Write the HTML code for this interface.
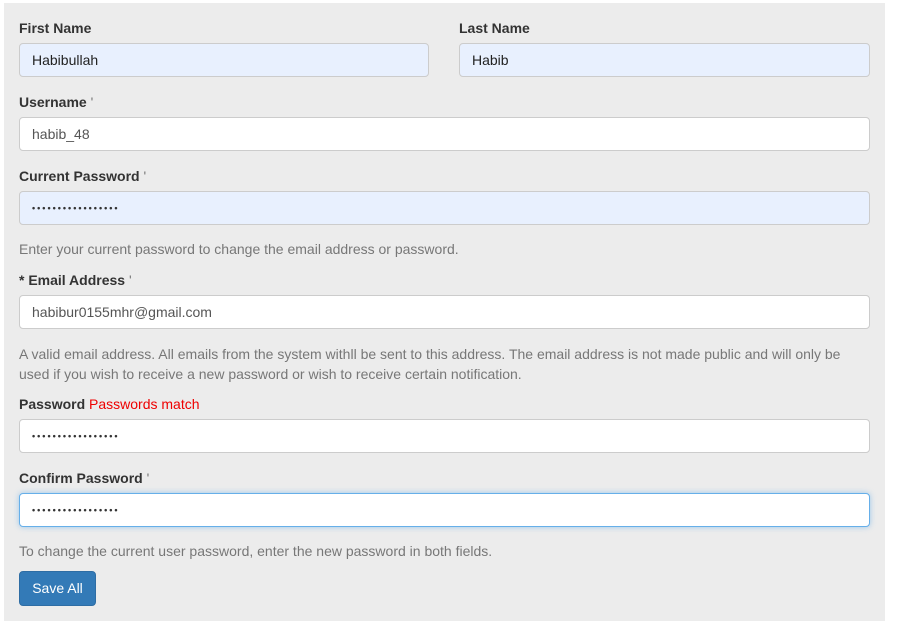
<!DOCTYPE html><html><head><style>
body{margin:0;width:907px;height:635px;background:#fff;font-family:"Liberation Sans",Arial,sans-serif;position:relative;overflow:hidden}
.p{position:absolute;left:4px;top:3px;width:881px;height:618px;background:#ececec}
.l{position:absolute;font-weight:bold;font-size:14px;color:#333;line-height:16px}
.l span{font-weight:normal;color:#777}
.i{position:absolute;height:32px;border:1px solid #ccc;border-radius:4px;background:#fff;box-sizing:content-box;font-size:14px;color:#555;line-height:32px;padding-left:12px}
.a{background:#e8f0fe;color:#222}
.d{font-size:9px;letter-spacing:2px;color:#333;font-weight:bold}
.h{position:absolute;left:19px;font-size:14px;color:#777;line-height:20px;width:850px}
</style></head><body>
<div class="p"></div>
<div class="l" style="left:19px;top:20px">First Name</div>
<div class="l" style="left:459px;top:20px">Last Name</div>
<div class="i a" style="left:19px;top:43px;width:396px">Habibullah</div>
<div class="i a" style="left:459px;top:43px;width:397px">Habib</div>
<div class="l" style="left:19px;top:94px">Username <span>'</span></div>
<div class="i" style="left:19px;top:117px;width:837px">habib_48</div>
<div class="l" style="left:19px;top:168px">Current Password <span>'</span></div>
<div class="i a d" style="left:19px;top:191px;width:837px">•••••••••••••••••</div>
<div class="h" style="top:239px">Enter your current password to change the email address or password.</div>
<div class="l" style="left:19px;top:272px">* Email Address <span>'</span></div>
<div class="i" style="left:19px;top:295px;width:837px">habibur0155mhr@gmail.com</div>
<div class="h" style="top:344px">A valid email address. All emails from the system withll be sent to this address. The email address is not made public and will only be used if you wish to receive a new password or wish to receive certain notification.</div>
<div class="l" style="left:19px;top:396px">Password <span style="color:#e00">Passwords match</span></div>
<div class="i d" style="left:19px;top:419px;width:837px">•••••••••••••••••</div>
<div class="l" style="left:19px;top:470px">Confirm Password <span>'</span></div>
<div class="i d" style="left:19px;top:493px;width:837px;border-color:#66afe9;box-shadow:0 0 6px rgba(102,175,233,.6)">•••••••••••••••••</div>
<div class="h" style="top:541px">To change the current user password, enter the new password in both fields.</div>
<div style="position:absolute;left:19px;top:571px;width:75px;height:33px;background:#337ab7;border:1px solid #2e6da4;border-radius:4px;color:#fff;font-size:14px;line-height:33px;text-align:center">Save All</div>
</body></html>
